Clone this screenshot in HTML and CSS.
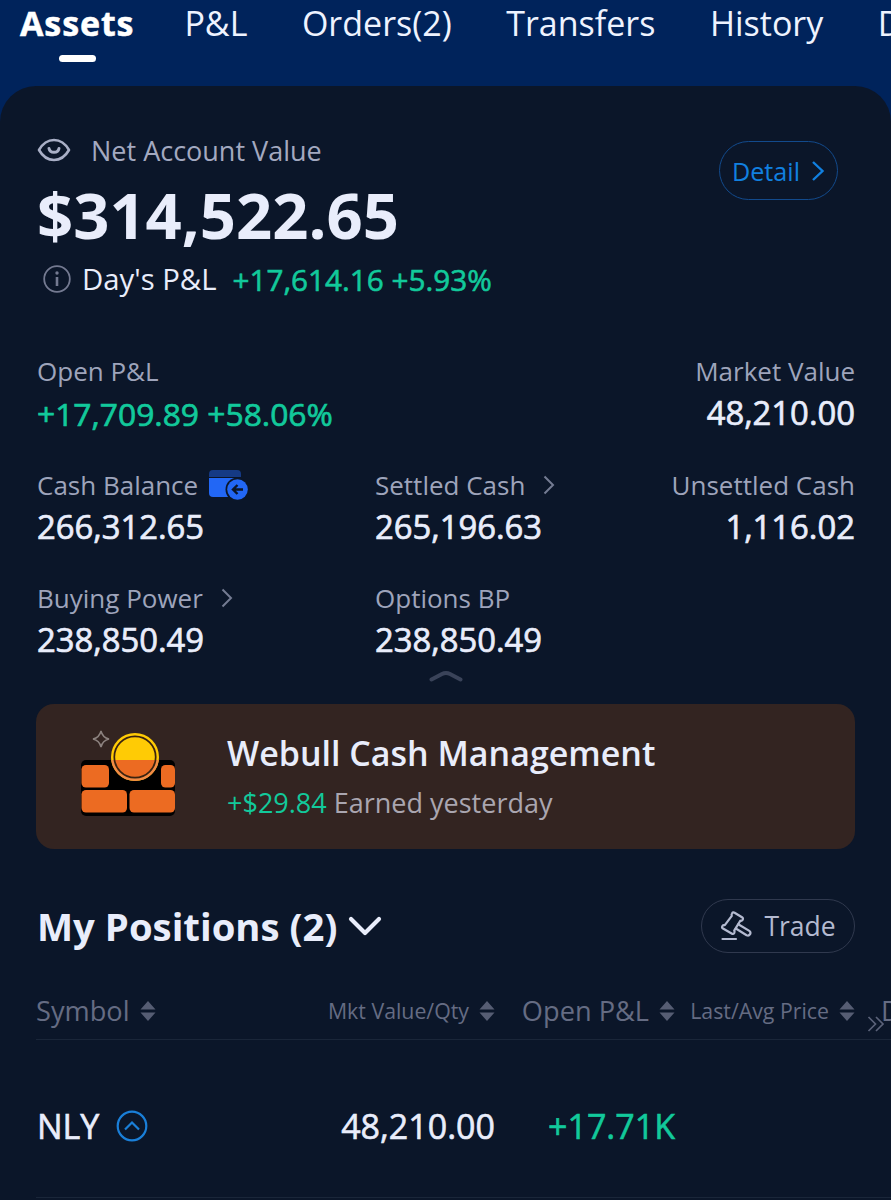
FILE: index.html
```html
<!DOCTYPE html>
<html lang="en">
<head>
  <meta charset="UTF-8" />
  <meta name="viewport" content="width=device-width, initial-scale=1.0"/>
  <title>Assets</title>
  <link rel="stylesheet" href="styles.css">
</head>
<body>
  <nav class="tabs">
    <a class="tab active">Assets</a>
    <a class="tab">P&amp;L</a>
    <a class="tab">Orders(2)</a>
    <a class="tab">Transfers</a>
    <a class="tab">History</a>
    <a class="tab">D</a>
  </nav>
  <main class="card">
    <section class="summary">
      <div>
        <div class="net-label">
          <svg width="34" height="24" viewBox="0 0 34 24" fill="none" stroke="#a9afc6" stroke-width="2.6">
            <path d="M2 12C6 5 11 2 17 2s11 3 15 10c-4 7-9 10-15 10S6 19 2 12z" stroke-linejoin="round"/>
            <path d="M12 10.500c1 5 9 5 10 0" stroke-width="3" stroke-linecap="round"/>
          </svg>
          <span>Net Account Value</span>
        </div>
        <div class="net-value">$314,522.65</div>
        <div class="day">
          <svg width="28" height="28" viewBox="0 0 28 28" fill="none" stroke="#747a91" stroke-width="1.800">
            <circle cx="14" cy="14" r="12.800"/>
            <path d="M14 12v9" stroke-width="2.600"/>
            <circle cx="14" cy="8" r="1.700" fill="#747a91" stroke="none"/>
          </svg>
          <span class="day-label">Day's P&amp;L</span>
          <span class="day-value up">+17,614.16 +5.93%</span>
        </div>
      </div>
      <button class="detail">Detail
        <svg width="14" height="22" viewBox="0 0 14 22" fill="none" stroke="#1180e0" stroke-width="2.400"><path d="M2 2l9.500 9L2 20"/></svg>
      </button>
    </section>

    <section class="stats">
      <div class="stat wide">
        <div class="label">Open P&amp;L</div>
        <div class="value up">+17,709.89 +58.06%</div>
      </div>
      <div class="stat right">
        <div class="label">Market Value</div>
        <div class="value">48,210.00</div>
      </div>
      <div class="stat">
        <div class="label">Cash Balance
          <svg class="wallet" width="40" height="30" viewBox="0 0 40 30">
            <path d="M0 7V4a4 4 0 0 1 4-4h24a4 4 0 0 1 4 4v3z" fill="#153a85"/>
            <path d="M0 8h32v19H4a4 4 0 0 1-4-4z" fill="#2267f5"/>
            <circle cx="28.500" cy="19.500" r="12" fill="#0b1629"/>
            <circle cx="28.500" cy="19.500" r="10.300" fill="#2267f5"/>
            <path d="M34 19.500H24M28.500 15l-4.500 4.500 4.500 4.500" fill="none" stroke="#0b1629" stroke-width="2.400"/>
          </svg>
        </div>
        <div class="value">266,312.65</div>
      </div>
      <div class="stat">
        <div class="label">Settled Cash
          <svg class="more" width="12" height="20" viewBox="0 0 12 20"><path d="M1.500 1.500l8.500 8.500-8.500 8.500"/></svg>
        </div>
        <div class="value">265,196.63</div>
      </div>
      <div class="stat right">
        <div class="label">Unsettled Cash</div>
        <div class="value">1,116.02</div>
      </div>
      <div class="stat">
        <div class="label">Buying Power
          <svg class="more" width="12" height="20" viewBox="0 0 12 20"><path d="M1.500 1.500l8.500 8.500-8.500 8.500"/></svg>
        </div>
        <div class="value">238,850.49</div>
      </div>
      <div class="stat">
        <div class="label">Options BP</div>
        <div class="value">238,850.49</div>
      </div>
    </section>

    <div class="collapse">
      <svg width="34" height="12" viewBox="0 0 34 12" fill="none" stroke="#3a4359" stroke-width="4" stroke-linecap="round"><path d="M2.500 9.500L13 4q4-2 8 0l10.500 5.500"/></svg>
    </div>

    <section class="banner">
      <svg class="bricks" width="96" height="86" viewBox="0 0 96 86">
        <path d="M21 1q1.500 6.500 8 8-6.500 1.500-8 8-1.500-6.500-8-8 6.500-1.500 8-8z" fill="none" stroke="#8c827f" stroke-width="1.500"/>
        <rect x="1" y="30" width="94" height="56" rx="5" fill="#000"/>
        <rect x="1.500" y="35" width="27.500" height="22.500" rx="4.500" fill="#ec6b22"/>
        <rect x="81" y="35" width="14" height="22.500" rx="4.500" fill="#ec6b22"/>
        <rect x="1.500" y="60" width="45.500" height="22.500" rx="4.500" fill="#ec6b22"/>
        <rect x="49.500" y="60" width="45.500" height="22.500" rx="4.500" fill="#ec6b22"/>
        <circle cx="55" cy="27" r="24" fill="#ffcb05"/>
        <path d="M31.200 30a24 24 0 0 0 47.600 0z" fill="#f28a45"/>
        <path d="M34.700 30a20.500 20.500 0 0 0 40.600 0z" fill="#ec6b22"/>
        <circle cx="55" cy="27" r="20.700" fill="none" stroke="#3a2310" stroke-width="1.700"/>
      </svg>
      <div class="banner-text">
        <div class="banner-title">Webull Cash Management</div>
        <div class="banner-sub"><span class="up">+$29.84</span> Earned yesterday</div>
      </div>
    </section>

    <section class="positions-head">
      <h2>My Positions (2)
        <svg width="34" height="21" viewBox="0 0 34 21" fill="none" stroke="#e9edfb" stroke-width="4.200" stroke-linecap="round" stroke-linejoin="round"><path d="M3 3l14 14L31 3"/></svg>
      </h2>
      <button class="trade">
        <svg width="32" height="30" viewBox="0 0 32 30" fill="none" stroke="#b4bad0" stroke-width="2.200" stroke-linejoin="round" stroke-linecap="round">
          <path d="M12 2.500q1-1.800 2.600-.8l7.400 4.600q1.600 1 .6 2.600-.8 1.200-2.200.8l-6.200 10q.8 1.200 0 2.400-1 1.400-2.600.4L3 17.500q-1.500-1-.6-2.500.8-1.300 2.400-.8l7-9.300q-.6-1.200.2-2.400z"/>
          <path d="M18.300 13.300l11 6.600q1.800 1.300.8 3.300-1.300 2-3.500 1l-10.800-6.700"/>
          <path d="M2.500 28h13.500"/>
        </svg>
        Trade
      </button>
    </section>

    <section class="table">
      <div class="row head">
        <div class="cell symbol">Symbol <svg class="sort" width="16" height="20" viewBox="0 0 16 20"><path d="M8 0l7.500 8.500H.5zM8 20L.5 11.500h15z"/></svg></div>
        <div class="cell small">Mkt Value/Qty <svg class="sort" width="16" height="20" viewBox="0 0 16 20"><path d="M8 0l7.500 8.500H.5zM8 20L.5 11.500h15z"/></svg></div>
        <div class="cell">Open P&amp;L <svg class="sort" width="16" height="20" viewBox="0 0 16 20"><path d="M8 0l7.500 8.500H.5zM8 20L.5 11.500h15z"/></svg></div>
        <div class="cell small">Last/Avg Price <svg class="sort" width="16" height="20" viewBox="0 0 16 20"><path d="M8 0l7.500 8.500H.5zM8 20L.5 11.500h15z"/></svg></div>
        <div class="cell next">D</div>
        <svg class="scroll-hint" width="18" height="16" viewBox="0 0 18 16" fill="none" stroke="#5b6279" stroke-width="1.700"><path d="M1.500 1l7 7-7 7M9 1l7 7-7 7"/></svg>
      </div>
      <div class="row position">
        <div class="cell symbol">NLY
          <svg width="32" height="32" viewBox="0 0 32 32" fill="none" stroke="#1a7fd8" stroke-width="2.200"><circle cx="16" cy="16" r="14.300"/><path d="M9 19.500l7-7 7 7"/></svg>
        </div>
        <div class="cell">48,210.00</div>
        <div class="cell up">+17.71K</div>
      </div>
    </section>
  </main>
</body>
</html>
```
FILE: styles.css
```css
html, body {
  margin: 0;
  padding: 0;
  overflow: hidden;
  background: #00235b;
  font-family: 'Open Sans', 'Noto Sans', sans-serif;
  color: #e9edfb;
}
svg {
  display: block;
  flex: none;
}
button {
  font-family: inherit;
  background: transparent;
  box-sizing: border-box;
  padding: 0;
  cursor: pointer;
}
.up {
  color: #12c99b;
}
.tabs {
  display: flex;
  height: 86px;
  padding-left: 20px;
  white-space: nowrap;
}
.tab {
  flex: none;
  height: 62px;
  line-height: 46px;
  font-size: 34px;
  color: #eef3ff;
  margin-right: 54.500px;
}
.tab.active {
  display: flex;
  flex-direction: column;
  align-items: center;
  font-weight: 700;
  letter-spacing: 0.9px;
  color: #fff;
  margin-right: 50px;
  -webkit-text-stroke: 0.5px;
}
.tab.active::after {
  content: '';
  width: 37px;
  height: 7px;
  margin-top: 9px;
  border-radius: 4px;
  background: #fff;
}
.card {
  height: 1114px;
  box-sizing: border-box;
  padding: 44px 36px 0;
  border-radius: 36px 36px 0 0;
  background: #0b1629;
}
.summary {
  display: flex;
  justify-content: space-between;
  height: 221px;
}
.net-label {
  display: flex;
  align-items: center;
  gap: 20px;
  height: 40px;
  padding-left: 1px;
  font-size: 27px;
  color: #a3a9c0;
}
.net-value {
  padding-left: 1px;
  font-size: 63.300px;
  line-height: 90px;
  margin-bottom: -2px;
  font-weight: 700;
}
.day {
  display: flex;
  align-items: center;
  height: 42px;
  padding-left: 7px;
  font-size: 29.300px;
}
.day-label {
  margin: 0 16px 0 11px;
}
.day-value {
  font-size: 29.700px;
  -webkit-text-stroke: 0.6px;
}
.detail {
  display: flex;
  align-items: center;
  justify-content: center;
  gap: 11px;
  width: 119px;
  height: 59px;
  margin: 11px 17px 0 0;
  border: 1.500px solid #124a8c;
  border-radius: 30px;
  font-size: 25.200px;
  color: #1180e0;
}
.stats {
  display: grid;
  grid-template-columns: 338px 1fr 1fr;
  row-gap: 29.500px;
  padding-left: 1px;
}
.stat.wide {
  grid-column: span 2;
}
.stat.right {
  text-align: right;
}
.stat.right .label {
  justify-content: flex-end;
}
.label {
  display: flex;
  align-items: center;
  height: 40px;
  font-size: 26px;
  color: #9ea4bb;
  white-space: nowrap;
}
.value {
  line-height: 44px;
  font-size: 32.800px;
  -webkit-text-stroke: 0.7px;
}
.value.up {
  line-height: 46px;
  margin-bottom: -2px;
  font-size: 31.800px;
}
.wallet {
  margin-left: 11px;
}
.more {
  margin-left: 18px;
  fill: none;
  stroke: #747b92;
  stroke-width: 2;
}
.collapse {
  display: flex;
  align-items: center;
  justify-content: center;
  height: 28px;
}
.banner {
  display: flex;
  align-items: center;
  height: 145px;
  margin-top: 14px;
  border-radius: 18px;
  background: #332421;
}
.bricks {
  margin: -7px 0 0 44px;
}
.banner-text {
  margin-left: 51px;
}
.banner-title {
  font-size: 34px;
  line-height: 52px;
  font-weight: 600;
}
.banner-sub {
  font-size: 27px;
  line-height: 48px;
  color: #aaa6b0;
}
.positions-head {
  display: flex;
  align-items: center;
  justify-content: space-between;
  height: 54px;
  margin-top: 50px;
}
.positions-head h2 {
  display: flex;
  align-items: center;
  gap: 11px;
  margin: 0;
  padding-left: 1px;
  font-size: 38.300px;
  font-weight: 700;
}
.trade {
  display: flex;
  align-items: center;
  justify-content: center;
  gap: 12px;
  width: 154px;
  height: 54px;
  border: 1.500px solid #30394e;
  border-radius: 27px;
  font-size: 26.500px;
  color: #b4bad0;
}
.table {
  margin: 29px -36px 0 0;
}
.row {
  position: relative;
  display: grid;
  grid-template-columns: 200px 259px 180px 180px 36px;
  height: 57px;
  border-bottom: 1px solid #1a2639;
  white-space: nowrap;
}
.cell {
  display: flex;
  align-items: center;
  justify-content: flex-end;
  gap: 10px;
}
.cell.symbol, .cell.next {
  justify-content: flex-start;
}
.head {
  color: #656c83;
  font-size: 27.200px;
}
.head .small {
  font-size: 21.300px;
}
.head .next {
  padding-left: 26px;
}
.sort {
  fill: #565d73;
}
.scroll-hint {
  position: absolute;
  left: 831px;
  top: 34px;
}
.position {
  height: 143px;
  padding-top: 14px;
  font-size: 34px;
  -webkit-text-stroke: 0.6px;
}
.position .symbol {
  gap: 17px;
  padding-left: 1px;
}
```
